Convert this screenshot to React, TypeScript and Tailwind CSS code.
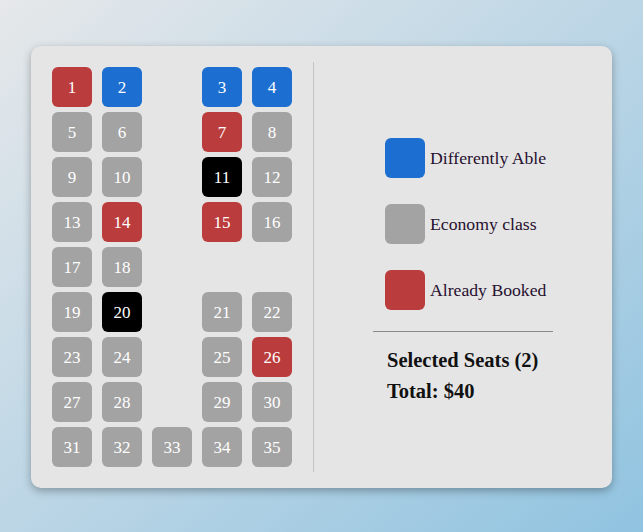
const RED = 'bg-[#bb3c3c]';
const BLUE = 'bg-[#1c6fd1]';
const GRAY = 'bg-[#a3a3a3]';
const BLACK = 'bg-black';

const rows: (number | null)[][] = [
  [1, 2, null, 3, 4],
  [5, 6, null, 7, 8],
  [9, 10, null, 11, 12],
  [13, 14, null, 15, 16],
  [17, 18, null, null, null],
  [19, 20, null, 21, 22],
  [23, 24, null, 25, 26],
  [27, 28, null, 29, 30],
  [31, 32, 33, 34, 35],
];

const booked = [1, 7, 14, 15, 26];
const able = [2, 3, 4];
const selected = [11, 20];

function seatColor(n: number) {
  if (booked.includes(n)) return RED;
  if (able.includes(n)) return BLUE;
  if (selected.includes(n)) return BLACK;
  return GRAY;
}

function Seat({ n }: { n: number }) {
  return (
    <div
      className={`flex h-10 w-10 cursor-pointer items-center justify-center rounded-md pt-px text-[17px] text-white ${seatColor(n)}`}
    >
      {n}
    </div>
  );
}

function Legend({ color, label }: { color: string; label: string }) {
  return (
    <div className="flex items-center gap-[5px]">
      <div className={`h-10 w-10 rounded-md ${color}`} />
      <span className="text-[17.7px] text-[#27102f]">{label}</span>
    </div>
  );
}

export default function App() {
  return (
    <div
      className="flex h-screen w-full items-center justify-center bg-gradient-to-br from-[#e6e8ea] to-[#90c3e0] pt-[2px]"
      style={{ fontFamily: '"Liberation Serif", "DejaVu Serif", serif' }}
    >
      <div className="flex w-[581px] rounded-[10px] bg-[#e5e5e5] py-4 shadow-[0_3px_8px_rgba(0,0,0,0.3)]">
        <div className="grid grid-cols-[repeat(5,40px)] gap-x-[10px] gap-y-[5px] px-[21px] py-[5px]">
          {rows.flatMap((row, i) =>
            row.map((n, j) => (n ? <Seat key={`${i}-${j}`} n={n} /> : <div key={`${i}-${j}`} className="h-10 w-10" />))
          )}
        </div>

        <div className="w-px self-stretch bg-[#c4c4c4]" />

        <div className="flex w-[298px] justify-center pt-[76px]">
          <div className="flex w-[180px] flex-col">
            <div className="flex flex-col gap-[26px] pl-3">
              <Legend color={BLUE} label="Differently Able" />
              <Legend color={GRAY} label="Economy class" />
              <Legend color={RED} label="Already Booked" />
            </div>
            <div className="mt-[21px] h-px bg-[#8a8a8a]" />
            <div className="mt-[13px] pl-[14px] text-[20.5px] font-bold leading-[31px] text-[#111]">
              <p>Selected Seats (2)</p>
              <p>Total: $40</p>
            </div>
          </div>
        </div>
      </div>
    </div>
  );
}
